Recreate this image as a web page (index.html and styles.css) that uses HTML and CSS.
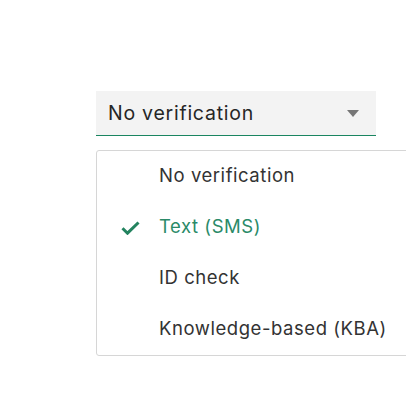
FILE: index.html
```html
<!DOCTYPE html>
<html>
<head>
<meta charset="utf-8">
<link rel="stylesheet" href="styles.css">
</head>
<body>
<div class="field">
  <div class="select">
    <span class="select-value">No verification</span>
    <svg class="caret" width="12" height="7" viewBox="0 0 12 7"><path d="M0 0h12L6 7z" fill="#767676"/></svg>
  </div>
  <ul class="menu">
    <li class="item"><span class="check"></span><span>No verification</span></li>
    <li class="item selected"><span class="check"><svg width="19" height="14" viewBox="0 0 19 14"><path d="M1.5 7.2l5 5L17.5 1.5" fill="none" stroke="#23835f" stroke-width="3"/></svg></span><span>Text (SMS)</span></li>
    <li class="item"><span class="check"></span><span>ID check</span></li>
    <li class="item"><span class="check"></span><span>Knowledge-based (KBA)</span></li>
  </ul>
</div>
</body>
</html>
```
FILE: styles.css
```css
html, body {
  margin: 0;
  padding: 0;
  overflow: hidden;
  background: #fff;
}
body {
  font-family: Inter, "Liberation Sans", sans-serif;
  color: #2b2b2b;
}
.field {
  padding: 91px 0 0 96px;
  display: flex;
  flex-direction: column;
  gap: 14px;
}
.select {
  width: 280px;
  height: 45px;
  background: #f3f3f3;
  border-bottom: 1.5px solid #1a8560;
  display: flex;
  align-items: center;
  justify-content: space-between;
  padding: 0 17px 0 12px;
  box-sizing: border-box;
}
.select-value {
  font-size: 19.5px;
  letter-spacing: 0.75px;
  color: #262626;
}
.caret {
  display: block;
}
.menu {
  list-style: none;
  margin: 0;
  padding: 0;
  width: 330px;
  border: 1px solid #d6d6d6;
  border-radius: 3px;
  background: #fff;
  box-sizing: border-box;
}
.item {
  height: 51px;
  display: flex;
  align-items: center;
  padding-bottom: 3px;
  box-sizing: border-box;
  font-size: 18.5px;
  letter-spacing: 0.55px;
  color: #333;
}
.check {
  width: 62px;
  display: flex;
  justify-content: flex-end;
  padding-right: 19px;
  padding-top: 3px;
  box-sizing: border-box;
}
.check svg { display: block; }
.item.selected { color: #2a8a68; }
```
